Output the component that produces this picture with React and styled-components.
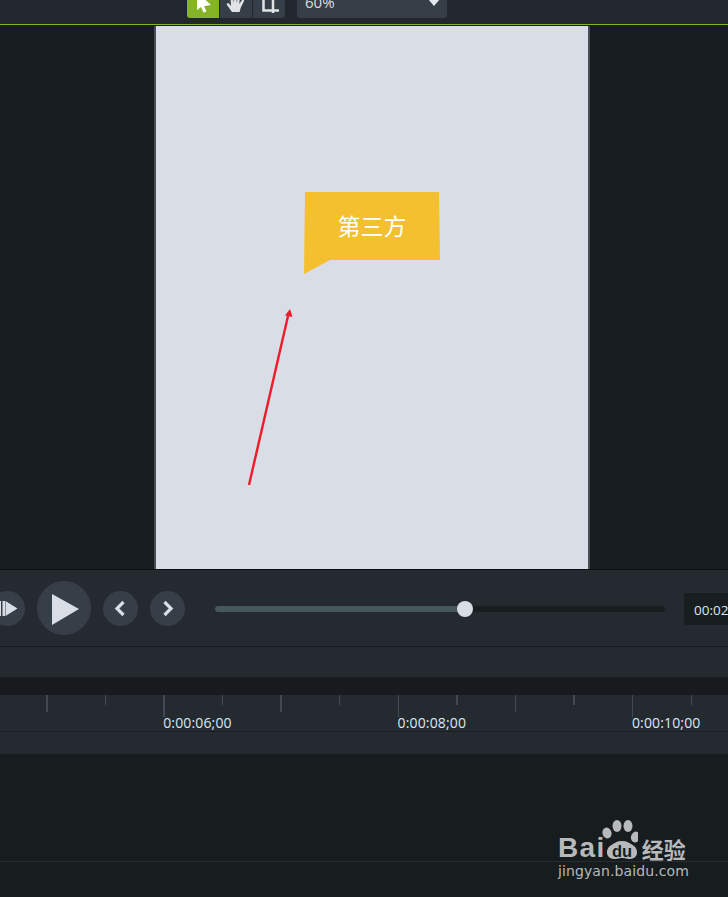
import React from 'react';
import styled, { createGlobalStyle } from 'styled-components';

const GlobalStyle = createGlobalStyle`
	html, body {
		margin: 0;
		padding: 0;
		background: #171c1f;
	}
	* {
		box-sizing: border-box;
	}
`;

const Page = styled.div`
	position: relative;
	display: flex;
	flex-direction: column;
	width: 728px;
	height: 897px;
	overflow: hidden;
	font-family: "Liberation Sans", Arial, sans-serif;
`;

const Toolbar = styled.div`
	display: flex;
	align-items: flex-end;
	flex: none;
	height: 25px;
	padding: 0 0 6px 187px;
	background: #22272e;
	border-bottom: 1px solid #85b526;
	overflow: hidden;
`;

const ToolGroup = styled.div`
	display: flex;
	gap: 1px;
	margin-right: 12px;
`;

const ToolButton = styled.div`
	display: flex;
	align-items: flex-end;
	justify-content: center;
	width: 32px;
	height: 32px;
	background: ${props => (props.$active ? '#85b526' : '#363f47')};
	border-radius: ${props => props.$radius || '0'};
`;

const ZoomSelect = styled.div`
	display: flex;
	align-items: flex-end;
	justify-content: space-between;
	width: 150px;
	height: 30px;
	padding: 0 7px 8px 8px;
	background: #363f47;
	border-radius: 0 0 3px 3px;
	color: #d9dee6;
	font-family: "Open Sans", sans-serif;
	font-size: 15px;
	line-height: 16px;
`;

const Caret = styled.span`
	width: 0;
	height: 0;
	margin-bottom: 4px;
	border-left: 6px solid transparent;
	border-right: 6px solid transparent;
	border-top: 7px solid #e4e8ee;
`;

const Stage = styled.div`
	display: flex;
	flex: none;
	height: 544px;
	padding: 1px 0 0 154px;
	background: #171c20;
`;

const Canvas = styled.div`
	position: relative;
	width: 436px;
	height: 100%;
	background: #d9dee6;
	border-left: 2px solid #4a4d50;
	border-right: 2px solid #4a4d50;
`;

const Callout = styled.div`
	position: absolute;
	left: 148px;
	top: 166px;
	display: flex;
	justify-content: center;
	width: 136px;
	height: 82px;
	padding-top: 19px;
	background: #f4c02f;
	clip-path: polygon(1px 0, 135px 0, 136px 68px, 26px 68px, 0 82px);
	color: #fff;
	font-family: "Noto Sans CJK SC", sans-serif;
	font-size: 23px;
	font-weight: 400;
	line-height: 29px;
`;

const ArrowOverlay = styled.svg`
	position: absolute;
	left: 80px;
	top: 269px;
`;

const Controls = styled.div`
	display: flex;
	align-items: center;
	flex: none;
	height: 78px;
	padding-top: 1px;
	background: #252a31;
	border-top: 1px solid #0c0e10;
	border-bottom: 1px solid #17191c;
`;

const RoundButton = styled.div`
	display: flex;
	align-items: center;
	justify-content: center;
	flex: none;
	width: ${props => props.$size}px;
	height: ${props => props.$size}px;
	margin-left: ${props => props.$gap}px;
	background: #363f47;
	border-radius: 50%;
`;

const PlayButton = styled(RoundButton)`
	margin-bottom: 2px;
`;

const Slider = styled.div`
	position: relative;
	flex: none;
	width: 450px;
	height: 6px;
	margin-left: 30px;
	background: #181d20;
	border-radius: 3px;
`;

const SliderFill = styled.div`
	height: 100%;
	background: #47585c;
	border-radius: 3px 0 0 3px;
`;

const SliderThumb = styled.div`
	position: absolute;
	top: -5px;
	width: 16px;
	height: 16px;
	margin-left: -8px;
	background: #d9dee6;
	border-radius: 50%;
`;

const TimeBox = styled.div`
	flex: none;
	width: 60px;
	height: 32px;
	margin-left: 19px;
	padding-left: 10px;
	background: #181d20;
	border-radius: 3px;
	color: #d9e6f0;
	font-family: "Open Sans", sans-serif;
	font-size: 13.5px;
	line-height: 35px;
	white-space: nowrap;
	overflow: hidden;
`;

const SubBar = styled.div`
	flex: none;
	height: 31px;
	background: #252a31;
	border-bottom: 1px solid #1c2024;
`;

const Gutter = styled.div`
	flex: none;
	height: 17px;
	background: #171b1d;
`;

const Ruler = styled.div`
	display: flex;
	flex: none;
	height: 37px;
	padding-left: 46px;
	background: #252a31;
	border-bottom: 1px solid #1b1f22;
`;

const TickCell = styled.div`
	flex: none;
	width: 58.6px;
	white-space: nowrap;
`;

const TickMark = styled.div`
	width: 1.5px;
	height: ${props => props.$height}px;
	background: #44494f;
`;

const TickLabel = styled.div`
	margin-top: -2px;
	color: #dbe8f1;
	font-family: "Open Sans", sans-serif;
	font-size: 14px;
	line-height: 16px;
	letter-spacing: 0.15px;
`;

const TrackHeader = styled.div`
	flex: none;
	height: 22px;
	background: #252a31;
`;

const TrackLane = styled.div`
	flex: none;
	height: 108px;
	background: #171c1f;
	border-bottom: 1px solid #272c30;
`;

const TrackRest = styled.div`
	flex: 1;
	background: #171c1f;
`;

const Watermark = styled.div`
	position: absolute;
	left: 558px;
	top: 818px;
	display: flex;
	flex-direction: column;
	color: #b7b9bb;
`;

const LogoRow = styled.div`
	display: flex;
	align-items: flex-end;
	height: 42px;
`;

const LogoLatin = styled.span`
	font-size: 28px;
	font-weight: 700;
	line-height: 24px;
	letter-spacing: 1.4px;
`;

const LogoPaw = styled.svg`
	flex: none;
	margin-left: -4px;
`;

const LogoCjk = styled.span`
	margin-left: 4px;
	font-family: "Noto Sans CJK SC", sans-serif;
	font-size: 22px;
	font-weight: 700;
	line-height: 24px;
`;

const LogoUrl = styled.div`
	margin-top: 2px;
	font-family: "DejaVu Sans", sans-serif;
	font-size: 14px;
	line-height: 18px;
	letter-spacing: 0.1px;
`;

const ticks = [
	{ height: 17 },
	{ height: 10 },
	{ height: 22, label: '0:00:06;00' },
	{ height: 10 },
	{ height: 17 },
	{ height: 10 },
	{ height: 22, label: '0:00:08;00' },
	{ height: 10 },
	{ height: 17 },
	{ height: 10 },
	{ height: 22, label: '0:00:10;00' },
	{ height: 10 }
];

const App = () => {
	return (
		<Page>
			<GlobalStyle />
			<Toolbar>
				<ToolGroup>
					<ToolButton $active $radius="0 0 0 3px">
						<svg width="22" height="18" viewBox="0 0 22 18">
							<path d="M5 -8 L5 10 L9 7 L11.5 12.5 L14.5 11.5 L12 6.2 L19 5 Z" fill="#fff" />
						</svg>
					</ToolButton>
					<ToolButton>
						<svg width="24" height="18" viewBox="0 4 24 18">
							<path
								d="M8 16 L3 9 C2 7.5 4 6.5 5 7.6 L7 10 L6.5 2 C6.5 0.5 8.6 0.5 8.8 2 L9.6 7 L10 0 C10.2 -1.4 12.2 -1.4 12.4 0 L12.7 7 L14 1 C14.3 -0.3 16.2 0 16 1.4 L15.2 8 L18 4 C19 3 20.6 3.8 20 5 L16.6 12 L15.6 16 Z"
								fill="#dfe3e8"
							/>
						</svg>
					</ToolButton>
					<ToolButton $radius="0 0 3px 0">
						<svg width="20" height="18" viewBox="0 0 20 18">
							<path d="M4.5 -4 V10.5 H20 M14 -4 V13" fill="none" stroke="#dfe3e8" strokeWidth="2.5" />
						</svg>
					</ToolButton>
				</ToolGroup>
				<ZoomSelect>
					60%
					<Caret />
				</ZoomSelect>
			</Toolbar>

			<Stage>
				<Canvas>
					<Callout>第三方</Callout>
					<ArrowOverlay width="70" height="200" viewBox="0 0 70 200">
						<path d="M13 190 L52 21" stroke="#ee1c2b" strokeWidth="2.4" fill="none" />
						<path d="M54 14 L56.5 22 L49 20.5 Z" fill="#ee1c2b" />
					</ArrowOverlay>
				</Canvas>
			</Stage>

			<Controls>
				<RoundButton $size={35} $gap={-10}>
					<svg width="35" height="35" viewBox="0 0 35 35">
						<path d="M9.5 10 H11 V25 H9.5 Z M12.5 10 H15 V25 H12.5 Z M15.5 10 L27.5 17.5 L15.5 25 Z" fill="#d9dee6" />
					</svg>
				</RoundButton>
				<PlayButton $size={54} $gap={12}>
					<svg width="54" height="54" viewBox="0 0 54 54">
						<path d="M15 13 L42 28 L15 44 Z" fill="#d9dee6" />
					</svg>
				</PlayButton>
				<RoundButton $size={35} $gap={12}>
					<svg width="35" height="35" viewBox="0 0 35 35">
						<path d="M20.5 11 L14 17.5 L20.5 24" fill="none" stroke="#d9dee6" strokeWidth="3.2" />
					</svg>
				</RoundButton>
				<RoundButton $size={35} $gap={12}>
					<svg width="35" height="35" viewBox="0 0 35 35">
						<path d="M14.5 11 L21 17.5 L14.5 24" fill="none" stroke="#d9dee6" strokeWidth="3.2" />
					</svg>
				</RoundButton>
				<Slider>
					<SliderFill style={{ width: '250px' }} />
					<SliderThumb style={{ left: '250px' }} />
				</Slider>
				<TimeBox>00:02</TimeBox>
			</Controls>

			<SubBar />
			<Gutter />

			<Ruler>
				{ticks.map((tick, i) => (
					<TickCell key={i}>
						<TickMark $height={tick.height} />
						{tick.label && <TickLabel>{tick.label}</TickLabel>}
					</TickCell>
				))}
			</Ruler>
			<TrackHeader />
			<TrackLane />
			<TrackRest />

			<Watermark>
				<LogoRow>
					<LogoLatin>Bai</LogoLatin>
					<LogoPaw width="36" height="42" viewBox="0 0 36 42">
						<ellipse cx="5" cy="15" rx="4.5" ry="5.5" fill="#b7b9bb" transform="rotate(-15 5 15)" />
						<ellipse cx="15" cy="8" rx="4.5" ry="6" fill="#b7b9bb" />
						<ellipse cx="26" cy="8" rx="4.5" ry="6" fill="#b7b9bb" />
						<ellipse cx="33.5" cy="19" rx="4.5" ry="5.5" fill="#b7b9bb" transform="rotate(15 33.5 19)" />
						<path d="M20 23 C25 23 28 25 32 28 C37 32 36 41 28 41 C24 41 23 40 20 40 C17 40 16 41 12 41 C4 41 3 32 8 28 C12 25 15 23 20 23 Z" fill="#b7b9bb" />
						<text x="20" y="39" textAnchor="middle" fontFamily="Liberation Sans" fontWeight="700" fontSize="16.5" fill="#171c1f">du</text>
					</LogoPaw>
					<LogoCjk>经验</LogoCjk>
				</LogoRow>
				<LogoUrl>jingyan.baidu.com</LogoUrl>
			</Watermark>
		</Page>
	);
};

export default App;
